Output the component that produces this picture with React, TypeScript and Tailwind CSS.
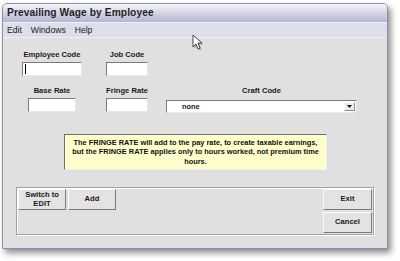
import React from 'react';

const font = { fontFamily: '"Liberation Sans", Arial, sans-serif' };

function Field({ label, width }: { label: string; width: string }) {
  return (
    <div className="flex flex-col items-center">
      <div className="h-[10px] text-[7.6px] font-bold leading-[10px] text-[#1a1a1a] whitespace-nowrap">{label}</div>
      <div className={`mt-[2px] h-[14px] ${width} bg-white border border-t-[#7a7a7a] border-l-[#7a7a7a] border-r-[#e8e8e8] border-b-[#e8e8e8]`} />
    </div>
  );
}

function Btn({ children, w }: { children: React.ReactNode; w: string }) {
  return (
    <button
      type="button"
      className={`${w} h-[21px] bg-[#e3e3e3] border border-t-[#fbfbfb] border-l-[#fbfbfb] border-r-[#7c7c7c] border-b-[#7c7c7c] text-[7.6px] font-bold leading-[8.5px] text-[#1a1a1a] flex items-center justify-center text-center`}
    >
      {children}
    </button>
  );
}

export default function App() {
  return (
    <div className="relative w-[400px] h-[261px] bg-white overflow-hidden" style={font}>
      <div className="ml-[2px] mt-[3px] w-[386px] h-[246px] flex flex-col border border-[#8c8fa6] rounded-t-[5px] bg-[#e0e0e0] shadow-[3px_4px_6px_rgba(0,0,0,0.45)]">
        {/* title bar */}
        <div className="h-[19px] rounded-t-[4px] bg-gradient-to-b from-[#f6f6f9] to-[#b3b6cf] border-b border-[#f2f3f8] flex items-center pl-[4px]">
          <span className="text-[10.2px] font-bold text-[#1e1e28] tracking-[0.1px]">Prevailing Wage by Employee</span>
        </div>
        {/* menu bar */}
        <div className="h-[15px] bg-[#dcdeeb] border-b border-[#eef0f6] flex items-center pl-[4px] gap-[9px] text-[8.6px] text-[#1a1a1a]">
          <span>Edit</span>
          <span>Windows</span>
          <span>Help</span>
        </div>
        {/* form */}
        <div className="flex-1 flex flex-col pt-[12px]">
          <div className="flex pl-[19px] gap-[24px]">
            <div className="w-[60px] flex flex-col items-center">
              <div className="h-[10px] text-[7.6px] font-bold leading-[10px] text-[#1a1a1a] whitespace-nowrap">Employee Code</div>
              <div className="mt-[2px] h-[14px] w-[60px] bg-white border border-t-[#7a7a7a] border-l-[#7a7a7a] border-r-[#e8e8e8] border-b-[#e8e8e8] pl-[2px] pt-[1px]">
                <div className="w-[1px] h-[10px] bg-black" />
              </div>
            </div>
            <div className="w-[42px]">
              <Field label="Job Code" width="w-[42px]" />
            </div>
          </div>

          <div className="flex pl-[19px] mt-[10px]">
            <div className="w-[60px]">
              <Field label="Base Rate" width="w-[48px]" />
            </div>
            <div className="w-[42px] ml-[24px]">
              <Field label="Fringe Rate" width="w-[42px]" />
            </div>
            <div className="w-[191px] ml-[18px] flex flex-col items-center">
              <div className="h-[10px] text-[7.6px] font-bold leading-[10px] text-[#1a1a1a]">Craft Code</div>
              <div className="mt-[4px] h-[13px] w-[191px] bg-white border border-t-[#7a7a7a] border-l-[#7a7a7a] border-r-[#e8e8e8] border-b-[#e8e8e8] flex items-center justify-between">
                <span className="pl-[15px] text-[7.4px] font-bold text-[#222]">none</span>
                <span className="mr-[1px] w-[11px] h-[9px] bg-[#ececec] border border-t-[#fff] border-l-[#fff] border-r-[#8a8a8a] border-b-[#8a8a8a] flex items-center justify-center">
                  <svg width="5" height="3" viewBox="0 0 5 3"><path d="M0 0h5L2.5 3z" fill="#111" /></svg>
                </span>
              </div>
            </div>
          </div>

          <div className="ml-[61px] mt-[21px] w-[263px] h-[36px] bg-[#ffffcc] border border-t-[#6f6f6f] border-l-[#6f6f6f] border-r-[#efefef] border-b-[#efefef] flex items-center justify-center text-center px-[3px]">
            <p className="text-[7.4px] font-bold leading-[9.6px] text-[#111]">
              The FRINGE RATE will add to the pay rate, to create taxable earnings, but the FRINGE RATE applies only to hours worked, not premium time hours.
            </p>
          </div>

          <div className="ml-[13px] mt-[17px] w-[358px] h-[48px] border border-[#a2a2a2] shadow-[inset_1px_1px_0_#fff,1px_1px_0_#fff] p-[1px] flex justify-between">
            <div className="flex gap-[2px] items-start">
              <Btn w="w-[48px]">
                Switch to
                <br />
                EDIT
              </Btn>
              <Btn w="w-[48px]">Add</Btn>
            </div>
            <div className="flex flex-col gap-[2px]">
              <Btn w="w-[49px]">Exit</Btn>
              <Btn w="w-[49px]">Cancel</Btn>
            </div>
          </div>
        </div>
      </div>

      {/* mouse pointer */}
      <svg className="absolute left-[192px] top-[34px]" width="14" height="18" viewBox="0 0 14 18">
        <path d="M2.5 2.5v12l3-3 2 5 2-1-2-5h4z" fill="rgba(0,0,0,0.25)" />
        <path d="M1 1v12l3-3 2 5 2-1-2-5h4z" fill="#fff" stroke="#333" strokeWidth="0.9" strokeLinejoin="round" />
      </svg>
    </div>
  );
}
